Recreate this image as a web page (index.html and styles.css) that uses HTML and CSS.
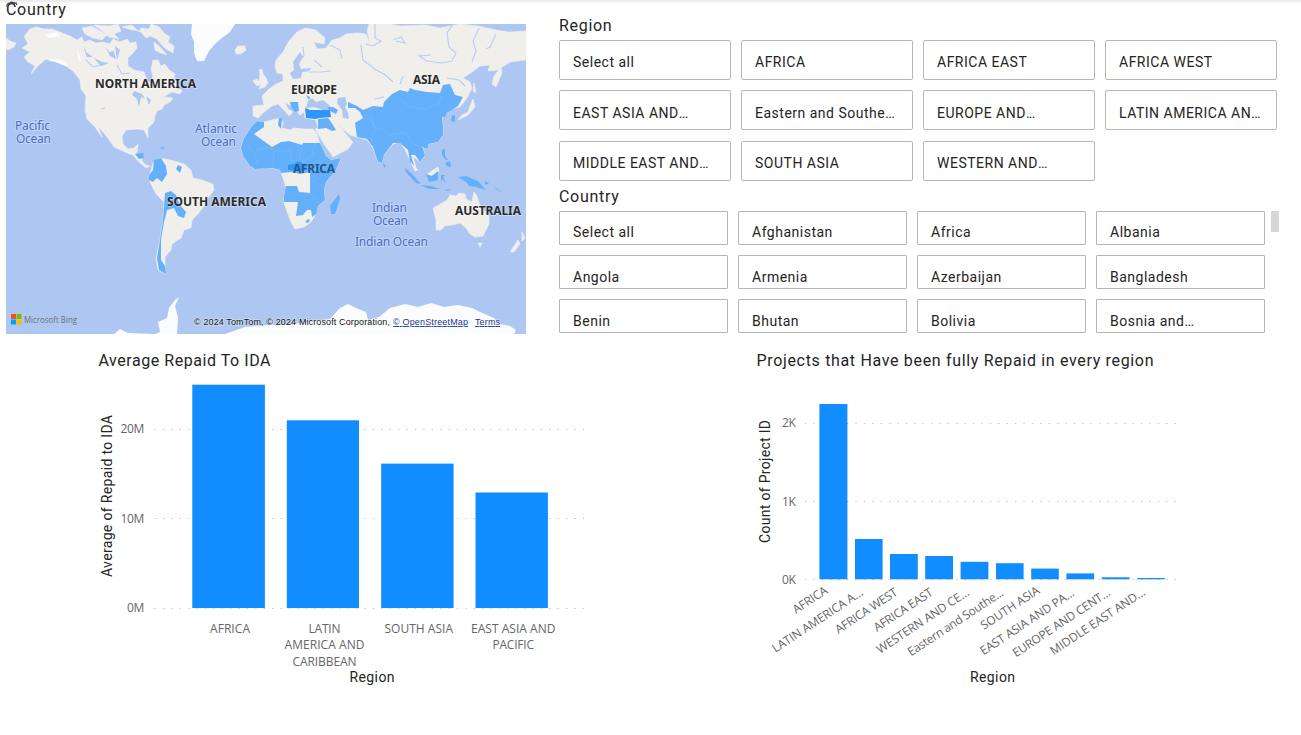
FILE: index.html
```html
<!DOCTYPE html>
<html lang="en">
<head>
<meta charset="utf-8">
<title>Country and region report</title>
<link rel="stylesheet" href="styles.css">
</head>
<body>
<main class="report">
  <div class="top">
    <section class="map-visual">
      <h2 class="title">Country<svg class="busy" width="12" height="7" viewBox="0 0 12 7"><path d="M1 6V3.500L3 2l1 1 2-2 2 1.500 2-.5 1 2M4 1l1 1M8 1v2" fill="none" stroke="#444" stroke-width="1.200"/></svg></h2>
      <svg class="map" width="520" height="310" viewBox="6 24 520 310">
        <rect class="sea" x="6" y="24" width="520" height="310"/>
        <g class="land">
          <path d="M24 36L30 29 36 27 44 29 52 29 60 32 70 36 77 40 82 37 84 42 90 40 96 43 103 42 110 44 113 39 120 42 127 39 130 43 136 42 137 48 132 54 128 58 128 66 134 70 144 72 147 80 150 83 153 76 151 69 153 60 158 60 161 66 165 64 169 70 175 74 174 79 178 84 176 89 182 90 180 94 172 92 165 96 161 98 166 97 173 98 170 102 164 105 162 109 157 111 155 116 154 122 148 128 148 138 144 130 137 129 126 130 122 136 123 144 128 149 134 148 138 144 137 152 135 154 142 155 142 161 146 165 150 166 146 168 139 162 133 155 127 153 114 147 108 138 98 126 102 137 95 127 87 119 85 110 86 96 81 89 80 80 73 71 66 66 58 62 51 61 46 59 38 66 31 74 35 66 28 62 24 57 30 52 22 48 28 44z"/>
          <path d="M6 38L10 41 16 43 14 47 8 50 6 49zM82 28l10-2 8 5 7 4-5 5-9-2-8-4zM94 25l15 1 9-2 3 7-7 3 5 5-10-2-8-7zM122 27l10-2 7 7 2-4 8 1 2-5 8 3 6 7 5 3-2 5 6 4-1 7-7-4-4-4-5-6-7-3-4 2-6-7-8-1zM154 42l7 6 6 7-6-2-6-3z"/>
          <path d="M235 50l3-4 7 0 1 4-5 4-5 0zM253 81l4-2 2 3 1-8-1-4 3-1 1 5 3 4 2 5-3 4-6 2 2-5-4 2zM501 67l1 6-6 14-4-3 2-8z"/>
          <path d="M277 73L275 66 276 60 283 52 289 41 297 32 305 28 316 30 325 38 324 44 314 42 317 49 326 48 332 40 340 38 346 34 357 33 366 34 370 43 367 31 369 24 390 24 400 26 426 25 440 28 460 24 478 26 496 30 509 32 526 31 526 60 510 62 498 70 488 71 490 65 480 66 472 72 463 78 470 82 472 88 467 98 460 107 451 109 442 114 443 126 443 135 438 142 428 144 422 146 425 155 420 162 413 156 416 168 410 160 405 150 400 142 393 144 384 155 382 163 378 162 373 148 367 140 357 137 350 135 343 129 337 122 345 133 353 142 348 149 333 157 324 144 315 129 318 128 316 120 305 118 304 112 300 115 294 108 285 102 288 109 293 112 289 116 284 110 278 104 272 106 264 112 258 118 253 116 253 106 264 105 262 96 269 89 276 84 283 81 283 74 289 75z"/>
          <path d="M252 126L257 121 264 122 280 118 283 122 282 128 290 130 294 128 304 129 313 129 317 134 320 144 326 156 331 160 341 158 336 170 326 182 324 190 325 200 318 206 314 217 311 222 304 227 295 229 291 222 284 203 284 196 286 188 283 178 280 170 272 168 262 168 255 169 250 166 243 156 241 148 244 138z"/>
          <path d="M153 163L160 158 170 160 184 164 191 170 193 178 202 180 213 184 214 190 208 198 204 206 198 214 192 220 191 228 184 230 181 238 172 244 171 250 165 257 165 266 166 274 158 270 156 258 160 240 163 220 164 202 156 194 150 182 149 176z"/>
          <path d="M433 208L437 206 447 200 450 195 456 196 459 193 465 194 466 199 472 202 474 192 477 196 480 206 489 216 489 224 483 236 475 237 470 234 466 228 460 223 452 225 445 226 441 230 436 230 436 220zM478 243l4 0-2 4zM518 240l2 4-6 8-4 0zM522 232l3 6-3 3z"/>
          <path d="M474 83l2 10-3-2zM473 99l2 8-7 8-10 5 4-5 6-3 2-6zM427 174l11-7 1 4-8 5zM411 163l7 7-3 1z"/>
        </g>
        <g class="ice">
          <path d="M192 24L235 24 230 32 222 38 216 43 209 51 204 61 197 61 194 53 194 42 191 34zM45 35l12-3 4 4-12 2zM77 50l3 5 1 6-3-1zM48 59l12 0 8 6-3 1z"/>
          <path d="M114 334L120 329 128 333 155 334 160 332 158 322 167 318 169 308 175 300 179 297 175 306 178 318 177 334 225 334 245 327 268 325 288 325 322 320 330 319 340 308 348 304 356 308 366 312 368 320 379 317 390 308 405 304 418 307 431 303 444 307 458 305 472 308 480 312 494 318 500 324 510 326 516 330 514 334z"/>
        </g>
        <g class="water">
          <path d="M300 52l3 5-4 7 2 5 10-1-2 3-7 1-1 6-8 1-3-6 4-3-1-8z"/>
          <path d="M306 108l2-7 4-3 4 4 7-2 6 5 4 5-10 0-9-3zM338 98l7-1 2 7-2 3 3 6 1 6-6-1-1-8-5-7z"/>
          <path d="M134 91l8 3 3 5-4-2-2 10-2-8-5-4zM146 96l5 4-2 5zM105 46l4 6 5-1 2 8-6-3zM83 46l4 7 6 4-6 0zM94 58l8 4 7 1-8 3zM115 46l5 4-3 10z"/>
        </g>
        <path class="river" d="M375 24v14l6 3-8 5-7-2M361 45l2 15 13 10 8 4 9 8M330 45l10 5 2 9M453 24l-6 9 2 14 7 6-4 8-11 2-14-2-8-5 12-1M479 28l-6 13 3 10-4 11M496 34l-6 13-4 2M393 40l8-3 4 6-9-2M403 76l-3 8M447 78l12 2 6 6M296 63l8-7-1-9M309 72l12 0 10-1M314 60l8 7M117 65l5 9 8-1M86 60l7 7 8-2M101 109l4-1M375 99l9-2"/>
        <g class="data">
          <path d="M252 126L257 121 264 122 264 127 254 134 272 147 281 142 289 141 302 145 303 143 320 143 326 156 331 160 341 158 336 170 326 182 324 190 325 200 318 206 316 214 312 217 311 210 307 210 303 215 296 216 298 202 284 202 284 196 286 186 297 186 299 192 310 193 310 172 300 174 292 172 281 173 280 170 272 168 255 169 250 166 243 156 241 148 244 138z"/>
          <path d="M348 102L357 106 363 110 373 106 383 107 384 102 392 94 400 90 408 92 410 88 415 90 427 92 440 93 443 85 450 84 455 95 463 97 458 106 450 111 447 112 445 117 442 117 443 126 443 135 438 142 428 144 428 148 425 148 422 146 425 155 420 162 415 155 411 155 414 166 410 161 408 150 400 143 393 143 384 155 382 163 378 162 373 147 367 139 357 137 355 123 363 118 360 112 355 108 348 108z"/>
          <path d="M318 119l10-1 3 4 5 8-4 1-6-3-8 1zM327 107l6 0 5 3-2 4-6-3zM290 102l8 0 1 9-4 1-4-5zM306 95l4 2-1 3zM279 118l3 0-1 11-3-4zM452 115l3 1 0 6-4-1zM383 163l3 3-2 2zM442 149l3 1 0 6 3 4-2 0-4-5zM445 163l5-2 1 6-4-1z"/>
          <path d="M154 160L161 158 166 166 167 174 162 182 157 178 153 182 149 180 149 175 153 170zM178 165l4 2-2 6-4-4zM135 154l8-1 1 5-5 1zM159 147l7 1-4 1zM165 193L171 191 176 195 180 205 186 212 184 218 178 216 174 208 167 210 164 222 161 240 161 260 165 266 166 274 159 270 157 258 160 240 163 220z"/>
          <path d="M339 194L340 199 335 214 331 214 330 206zM405 168l8 7 8 9-5-1-10-11zM426 174l6 2 6-5 0 9-9 2zM420 185l11 1 9 3-10 0zM441 175l5 0-3 2 3 6-4-4-1 4zM458 177l8-1 12 5 8 9-10-3-7-1-3-4zM444 190l8-1-4 2zM308 219l2 1-2 3-3-1zM484 181l5 2-3 2zM495 187l8 6-7-4z"/>
        </g>
        <path class="strong" d="M305 108l5 2 20 0 1 7-12 1-3 1-10-1zM288 165l6-1 5-3 8 6-6 4-13-1z"/>
        <path class="border" d="M247 145l7 8 4 11M258 150l10-3 6 4-1 15M274 151l16 0 2 11M302 147l-3 15M315 143l-3 12-10 8M326 158l-12 11 0 10M298 192l12 2 9 9M311 180l11 6M398 98l12 9 14 2 14-5 4-8M368 115l7 12 8 3 5 5 18-3M370 145l5-15-3-16M407 133l4 10 10 4"/>
        <g class="continents">
          <text x="95" y="88" textLength="101">NORTH AMERICA</text>
          <text x="291" y="94" textLength="46">EUROPE</text>
          <text x="413" y="84" textLength="27">ASIA</text>
          <text x="167" y="206" textLength="99">SOUTH AMERICA</text>
          <text x="455" y="215" textLength="66">AUSTRALIA</text>
          <text class="covered" x="293" y="173" textLength="42">AFRICA</text>
        </g>
        <g class="oceans">
          <text x="15" y="130" textLength="35">Pacific</text><text x="16" y="143" textLength="35">Ocean</text>
          <text x="195" y="133" textLength="42">Atlantic</text><text x="201" y="146" textLength="35">Ocean</text>
          <text x="372" y="212" textLength="35">Indian</text><text x="373" y="225" textLength="35">Ocean</text>
          <text x="355" y="246" textLength="73">Indian Ocean</text>
        </g>
        <path fill="#f25022" d="M11 314h5v5h-5z"/><path fill="#7fba00" d="M16.500 314h5v5h-5z"/><path fill="#00a4ef" d="M11 319.500h5v5h-5z"/><path fill="#ffb900" d="M16.500 319.500h5v5h-5z"/>
        <text class="bing" x="24" y="322.500" textLength="53" lengthAdjust="spacingAndGlyphs">Microsoft Bing</text>
        <g class="credits">
          <text x="194" y="325" textLength="196">© 2024 TomTom, © 2024 Microsoft Corporation,</text>
          <text class="link" x="393" y="325" textLength="75">© OpenStreetMap</text>
          <text class="link" x="475" y="325" textLength="25">Terms</text>
        </g>
      </svg>
    </section>

    <div class="slicers">
      <section class="slicer">
        <h2 class="title region-title">Region</h2>
        <div class="tiles regions">
          <div class="tile">Select all</div><div class="tile">AFRICA</div><div class="tile">AFRICA EAST</div><div class="tile">AFRICA WEST</div>
          <div class="tile">EAST ASIA AND<span class="dots">...</span></div><div class="tile">Eastern and Southe<span class="dots">...</span></div><div class="tile">EUROPE AND<span class="dots">...</span></div><div class="tile">LATIN AMERICA AN<span class="dots">...</span></div>
          <div class="tile">MIDDLE EAST AND<span class="dots">...</span></div><div class="tile">SOUTH ASIA</div><div class="tile">WESTERN AND<span class="dots">...</span></div>
        </div>
      </section>
      <section class="slicer">
        <h2 class="title country-title">Country</h2>
        <div class="scroll-area">
          <div class="tiles countries">
            <div class="tile">Select all</div><div class="tile">Afghanistan</div><div class="tile">Africa</div><div class="tile">Albania</div>
            <div class="tile">Angola</div><div class="tile">Armenia</div><div class="tile">Azerbaijan</div><div class="tile">Bangladesh</div>
            <div class="tile">Benin</div><div class="tile">Bhutan</div><div class="tile">Bolivia</div><div class="tile">Bosnia and<span class="dots">...</span></div>
          </div>
          <div class="thumb"></div>
        </div>
      </section>
    </div>
  </div>

  <div class="charts">
    <svg class="chart" width="650" height="360" viewBox="0 345 650 360">
      <text class="chart-title" x="98.500" y="366" textLength="172">Average Repaid To IDA</text>
      <text class="axis-title" transform="translate(112 577) rotate(-90)" textLength="162">Average of Repaid to IDA</text>
      <path class="grid" d="M154.500 429.500H590M154.500 518.500H590M154.500 608.500H590"/>
      <g class="axis end">
        <text x="144" y="433">20M</text><text x="144" y="523">10M</text><text x="144" y="612">0M</text>
      </g>
      <g class="bars">
        <rect x="192.300" y="384.700" width="72.600" height="223.300"/>
        <rect x="286.800" y="420.300" width="72.200" height="187.700"/>
        <rect x="381.200" y="463.600" width="72.400" height="144.400"/>
        <rect x="475.500" y="492.500" width="72.400" height="115.500"/>
      </g>
      <g class="axis">
        <text x="210" y="633" textLength="40">AFRICA</text>
        <text x="308.500" y="633" textLength="32">LATIN</text>
        <text x="284.500" y="649" textLength="80">AMERICA AND</text>
        <text x="292.500" y="666" textLength="64">CARIBBEAN</text>
        <text x="384.500" y="633" textLength="68.500">SOUTH ASIA</text>
        <text x="471" y="633" textLength="84.500">EAST ASIA AND</text>
        <text x="492.500" y="649" textLength="41.500">PACIFIC</text>
      </g>
      <text class="axis-title" x="349.500" y="682" textLength="45">Region</text>
    </svg>
    <svg class="chart" width="651" height="360" viewBox="650 345 651 360">
      <text class="chart-title" x="756.500" y="366" textLength="397">Projects that Have been fully Repaid in every region</text>
      <text class="axis-title" transform="translate(770 543) rotate(-90)" textLength="123">Count of Project ID</text>
      <path class="grid" d="M805 423.500H1178M805 501.500H1178M805 579.500H1178"/>
      <g class="axis end">
        <text x="795.500" y="427">2K</text><text x="795.500" y="506">1K</text><text x="795.500" y="584">0K</text>
      </g>
      <g class="bars">
        <rect x="819.400" y="404" width="28" height="175.300"/>
        <rect x="855" y="539" width="27.600" height="40.300"/>
        <rect x="890" y="554" width="27.800" height="25.300"/>
        <rect x="925.200" y="556" width="27.800" height="23.300"/>
        <rect x="960.600" y="561.800" width="27.800" height="17.500"/>
        <rect x="996" y="563.200" width="27.600" height="16.100"/>
        <rect x="1031.200" y="568.600" width="27.600" height="10.700"/>
        <rect x="1066.400" y="573.400" width="27.800" height="5.900"/>
        <rect x="1101.800" y="577.300" width="27.800" height="2"/>
        <rect x="1137.200" y="578" width="27.600" height="1.300"/>
      </g>
      <g class="axis">
        <text transform="translate(796 614) rotate(-33.500)" textLength="39">AFRICA</text>
        <text transform="translate(775.500 653) rotate(-33.500)" textLength="106">LATIN AMERICA A...</text>
        <text transform="translate(838.500 634) rotate(-33.500)" textLength="72">AFRICA WEST</text>
        <text transform="translate(877 632) rotate(-33.500)" textLength="68">AFRICA EAST</text>
        <text transform="translate(880 654) rotate(-33.500)" textLength="108">WESTERN AND CE...</text>
        <text transform="translate(911 656.500) rotate(-33.500)" textLength="112">Eastern and Southe...</text>
        <text transform="translate(984 630) rotate(-33.500)" textLength="68">SOUTH ASIA</text>
        <text transform="translate(983.500 655.500) rotate(-33.500)" textLength="110">EAST ASIA AND PA...</text>
        <text transform="translate(1016 657.500) rotate(-33.500)" textLength="114">EUROPE AND CENT...</text>
        <text transform="translate(1053.500 655.500) rotate(-33.500)" textLength="111">MIDDLE EAST AND...</text>
      </g>
      <text class="axis-title" x="970" y="682" textLength="45">Region</text>
    </svg>
  </div>
</main>
</body>
</html>
```
FILE: styles.css
```css
* { box-sizing: border-box; }
body { margin: 0; background: #fff; font-family: Roboto, "Liberation Sans", sans-serif; color: #252423; }
.report { width: 1301px; height: 735px; overflow: hidden; background: linear-gradient(#e8e8e8, #f3f3f3 2px, #fff 4px); }
.top { display: flex; height: 345px; }
.map-visual { width: 559px; padding-left: 6px; }
.title { position: relative; margin: 0; font-size: 16px; font-weight: 400; letter-spacing: .7px; line-height: 20px; }
.map-visual .title { height: 24px; padding-top: 0; line-height: 19px; }
.busy { position: absolute; left: 0; top: 1px; }
.map { display: block; }
.sea, .water { fill: #adc7f2; }
.land { fill: #f0efec; stroke: #f0efec; stroke-width: .6; stroke-linejoin: round; }
.ice { fill: #fbfcfd; }
.river { fill: none; stroke: #b7cdf0; stroke-width: 1.1; }
.data { fill: #64b0fa; }
.strong { fill: #2f95fb; }
.border { fill: none; stroke: #7ebcfb; stroke-width: .6; }
.continents { font: 700 12px "Noto Sans", sans-serif; fill: #2b2b2b; paint-order: stroke; stroke: rgba(255,255,255,.4); stroke-width: 1.5px; }
.continents .covered { fill: #23588c; stroke: none; }
.oceans { font: 12px "Noto Sans", sans-serif; fill: #4b6cc6; paint-order: stroke; stroke: rgba(210,224,250,.6); stroke-width: 2px; }
.bing { font: 9px "Open Sans", sans-serif; fill: #6b6f76; }
.credits { font: 9px "Liberation Sans", sans-serif; fill: #111; paint-order: stroke; stroke: rgba(255,255,255,.4); stroke-width: 1.5px; }
.credits .link { fill: #1a3594; text-decoration: underline; }
.slicers { width: 742px; }
.region-title { height: 40px; padding-top: 16px; }
.country-title { height: 30px; padding-top: 6px; }
.tiles { display: grid; }
.regions { grid-template-columns: repeat(4, 172px); grid-auto-rows: 40px; gap: 10.4px 10px; }
.countries { grid-template-columns: repeat(4, 169px); grid-auto-rows: 34px; gap: 10.3px 10px; }
.tile { border: 1px solid #b8b7b5; border-radius: 2px; background: #fff; padding-left: 13px; font-size: 14px; letter-spacing: .5px; white-space: nowrap; overflow: hidden; line-height: 43px; }
.regions .tile:nth-child(n+5):nth-child(-n+8) { line-height: 44px; }
.countries .tile { line-height: 42px; border-radius: 1px; }
.countries .tile:nth-child(-n+4) { line-height: 41px; }
.dots { letter-spacing: -.7px; }
.scroll-area { display: flex; gap: 6px; }
.thumb { width: 8px; height: 21px; background: #d6d6d5; }
.charts { display: flex; }
.chart { display: block; }
.chart-title { font-size: 16px; fill: #252423; }
.axis-title { font-size: 14px; fill: #252423; }
.axis { font: 12px "Open Sans", sans-serif; fill: #666; }
.end { text-anchor: end; letter-spacing: -.3px; }
.grid { fill: none; stroke: #bdbdbd; stroke-width: 1; stroke-dasharray: 1.3 7.1; }
.bars { fill: #118dff; }
```
